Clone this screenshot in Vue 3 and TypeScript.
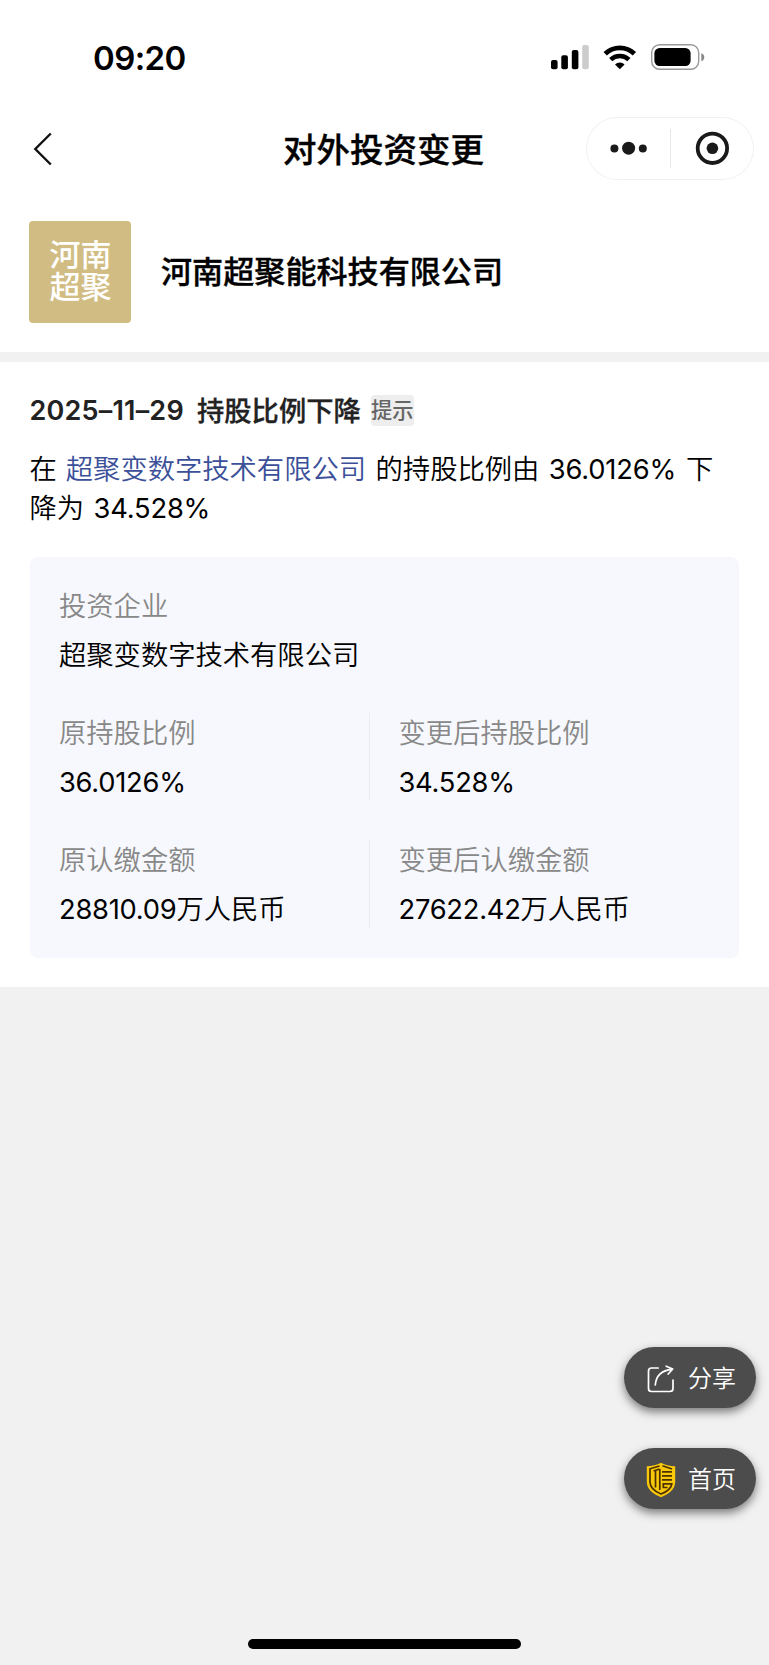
<script setup lang="ts">
interface Field {
  label: string
  amount?: string
  text?: string
}

const target: string = '超聚变数字技术有限公司'
const rows: Field[][] = [
  [
    { label: '原持股比例', amount: '36.0126%' },
    { label: '变更后持股比例', amount: '34.528%' },
  ],
  [
    { label: '原认缴金额', amount: '28810.09', text: '万人民币' },
    { label: '变更后认缴金额', amount: '27622.42', text: '万人民币' },
  ],
]
</script>

<template>
  <div class="screen">
    <div class="status">
      <span class="time">09:20</span>
      <svg class="indicators" width="156" height="30" viewBox="549 42 156 30">
        <rect x="551" y="60" width="6.6" height="9.2" rx="2" />
        <rect x="561.3" y="55.3" width="6.6" height="13.9" rx="2" />
        <rect x="571.8" y="50" width="6.6" height="19.2" rx="2" />
        <rect x="582.2" y="45" width="6.6" height="24.2" rx="2" fill="#ccc" />
        <g fill="none" stroke="#000">
          <path d="M605.2 53.8a21 21 0 0 1 29.2 0" stroke-width="4.8" />
          <path d="M610.7 59.7a13 13 0 0 1 18.2 0" stroke-width="4.5" />
        </g>
        <path d="M619.8 69.2l-4.8-4.8a7 7 0 0 1 9.6 0z" />
        <rect x="651.7" y="44.7" width="47" height="24.6" rx="8" fill="none" stroke="#999" stroke-width="1.4" />
        <rect x="654.4" y="48" width="36.2" height="18" rx="5.2" />
        <path d="M701.3 53.2a4.2 4.2 0 0 1 0 8z" fill="#888" />
      </svg>
    </div>

    <header class="nav">
      <svg class="back" width="20" height="36" viewBox="33 130 20 36">
        <path d="M50.8 132.500L35.3 148L50.8 163.500" fill="none" stroke="#111" stroke-width="2.4" />
      </svg>
      <h1 class="title">对外投资变更</h1>
      <div class="capsule">
        <svg width="168" height="62" viewBox="586 117 168 62" fill="#1a1a1a">
          <circle cx="614.4" cy="148.6" r="4" />
          <circle cx="628.6" cy="148.2" r="6.5" />
          <circle cx="642.8" cy="148.6" r="4" />
          <path d="M670.5 129v39" stroke="#e8e8e8" stroke-width="1" />
          <circle cx="712.4" cy="148.3" r="14.7" fill="none" stroke="#1a1a1a" stroke-width="3.8" />
          <circle cx="712.4" cy="148.3" r="5.8" />
        </svg>
      </div>
    </header>

    <section class="company">
      <div class="logo">河南<br />超聚</div>
      <div class="name">河南超聚能科技有限公司</div>
    </section>

    <main class="detail">
      <div class="heading">
        <span class="date">2025–11–29</span>
        <span class="event">持股比例下降</span>
        <span class="tag">提示</span>
      </div>
      <p class="summary">
        在<a class="link">{{ target }}</a>的持股比例由<span class="num">36.0126%</span>下<br />降为<span class="num">34.528%</span>
      </p>
      <div class="panel">
        <div class="cell">
          <div class="label">投资企业</div>
          <div class="value">{{ target }}</div>
        </div>
        <div v-for="(row, i) in rows" :key="i" class="row">
          <div v-for="f in row" :key="f.label" class="cell">
            <div class="label">{{ f.label }}</div>
            <div class="value"><span class="digits">{{ f.amount }}</span>{{ f.text }}</div>
          </div>
        </div>
      </div>
    </main>

    <button class="float share">
      <svg width="30" height="36" viewBox="0 0 30 36" fill="none" stroke="#fff" stroke-width="1.7" stroke-linecap="round" stroke-linejoin="round">
        <path d="M12.2 7H5.500a3 3 0 0 0-3 3V27.500a3 3 0 0 0 3 3H24a3 3 0 0 0 3-3V19" />
        <path d="M9.300 24C9.800 15.500 15 9.500 26.300 8.100M20.200 5.200L26.700 8L22.200 13" />
      </svg>
      <span>分享</span>
    </button>
    <button class="float home">
      <svg width="30" height="36" viewBox="0 0 30 36">
        <path d="M15 .8C11 3 6 4 .8 4.300V20C.8 28 8 32.500 15 35.200C22 32.500 29.200 28 29.200 20V4.300C24 4 19 3 15 .8z" fill="#f8c80a" />
        <g fill="none" stroke="#4b3000" stroke-width="1.7">
          <path d="M13.500 4L4 6.800V20C4 26.500 9.500 29.700 15 32C20.500 29.700 25.300 27 25.800 21.800H17.300V25.500H21.500" />
          <path d="M16.500 3.800L26 7M13.500 7L7.600 9M9.500 9V25.500M13.800 7V28M16 9.800H26M16 13.800H26M16 17.800H26" />
        </g>
      </svg>
      <span>首页</span>
    </button>
    <div class="indicator"></div>
  </div>
</template>

<style>
html,
body {
  margin: 0;
  background: #f1f1f1;
}
</style>

<style scoped>
.screen {
  position: relative;
  width: 769px;
  height: 1665px;
  overflow: hidden;
  background: #f1f1f1;
  color: #000;
  font-family: Inter, "Noto Sans CJK SC", sans-serif;
}
.status {
  display: flex;
  justify-content: space-between;
  align-items: center;
  box-sizing: border-box;
  height: 114px;
  padding: 0 64px 0 93px;
  background: #fff;
}
.time {
  padding-top: 1px;
  font-size: 33px;
  font-weight: 600;
  line-height: 40px;
  letter-spacing: -0.6px;
}
.nav {
  display: flex;
  align-items: center;
  justify-content: space-between;
  box-sizing: border-box;
  height: 69px;
  padding: 0 15px 0 33px;
  background: #fff;
}
.title {
  margin: 0 0 0 230px;
  padding-top: 2px;
  font-size: 33.5px;
  line-height: 48px;
  font-weight: 500;
  -webkit-text-stroke: 0.35px currentColor;
  white-space: nowrap;
  flex: 1;
}
.capsule {
  box-sizing: border-box;
  width: 168px;
  height: 63px;
  border-radius: 32px;
  box-shadow: inset 0 0 0 1px #f1f1f1;
}
.capsule svg {
  display: block;
}
.company {
  display: flex;
  align-items: center;
  box-sizing: border-box;
  height: 169px;
  padding: 9px 29px 0;
  gap: 30px;
  background: #fff;
}
.logo {
  box-sizing: border-box;
  width: 102px;
  height: 102px;
  padding: 18px 0 0 1px;
  border-radius: 4px;
  background: #d1bd83;
  color: #fff;
  font-size: 31px;
  line-height: 32px;
  font-weight: 500;
  text-align: center;
}
.name {
  font-size: 31.1px;
  font-weight: 500;
  -webkit-text-stroke: 0.35px currentColor;
  line-height: 44px;
}
.detail {
  box-sizing: border-box;
  height: 625px;
  margin-top: 10px;
  padding: 28px 30px 0 29.5px;
  background: #fff;
}
.heading {
  display: flex;
  align-items: center;
  height: 40px;
  font-size: 27.3px;
  font-weight: 500;
  color: #222;
  white-space: nowrap;
}
.date {
  width: 167.5px;
  font-size: 27px;
  font-weight: 560;
  letter-spacing: 0.2px;
}
.event {
  margin-top: -2px;
  -webkit-text-stroke: 0.3px currentColor;
}
.tag {
  width: 43px;
  height: 31px;
  margin-left: 10px;
  border-radius: 4px;
  background: #eee;
  color: #666;
  font-size: 21.3px;
  line-height: 31px;
  text-align: center;
}
.summary {
  margin: 20px 0 0;
  font-size: 27.3px;
  font-weight: 350;
  line-height: 39px;
  white-space: nowrap;
}
.link {
  margin: 0 9.5px 0 9px;
  color: #3b5099;
}
.num {
  margin: 0 10px 0 9.5px;
  font-weight: 380;
  letter-spacing: -0.2px;
}
.digits {
  font-weight: 380;
  letter-spacing: -0.25px;
}
.panel {
  display: flex;
  flex-direction: column;
  gap: 39px;
  box-sizing: border-box;
  height: 401px;
  margin-top: 29px;
  padding: 29px 0 0 29.5px;
  border-radius: 8px;
  background: #f7f8fd;
}
.row {
  display: grid;
  grid-template-columns: 310.5px 1fr;
  column-gap: 29px;
}
.row .cell:first-child {
  border-right: 1px solid #ebecf0;
}
.cell {
  height: 88px;
  font-size: 27.3px;
  font-weight: 350;
  white-space: nowrap;
}
.label {
  padding-top: 1px;
  line-height: 39px;
  color: #888;
}
.value {
  margin-top: 10px;
  line-height: 39px;
}
.float {
  position: absolute;
  right: 13px;
  display: flex;
  align-items: center;
  box-sizing: border-box;
  width: 132px;
  height: 61px;
  padding: 0 0 0 22px;
  gap: 12px;
  border: 0;
  border-radius: 31px;
  background: #4c4c4c;
  box-shadow: 0 4px 10px rgba(0, 0, 0, 0.5);
  color: #fff;
  font-family: inherit;
  font-size: 24px;
  font-weight: 350;
  line-height: 36px;
  white-space: nowrap;
}
.float svg {
  margin-top: 2px;
}
.float span {
  padding-top: 3px;
}
.share {
  top: 1347px;
}
.home {
  top: 1448px;
}
.indicator {
  position: absolute;
  left: 248px;
  bottom: 16px;
  width: 273px;
  height: 10px;
  border-radius: 5px;
  background: #000;
}
</style>
